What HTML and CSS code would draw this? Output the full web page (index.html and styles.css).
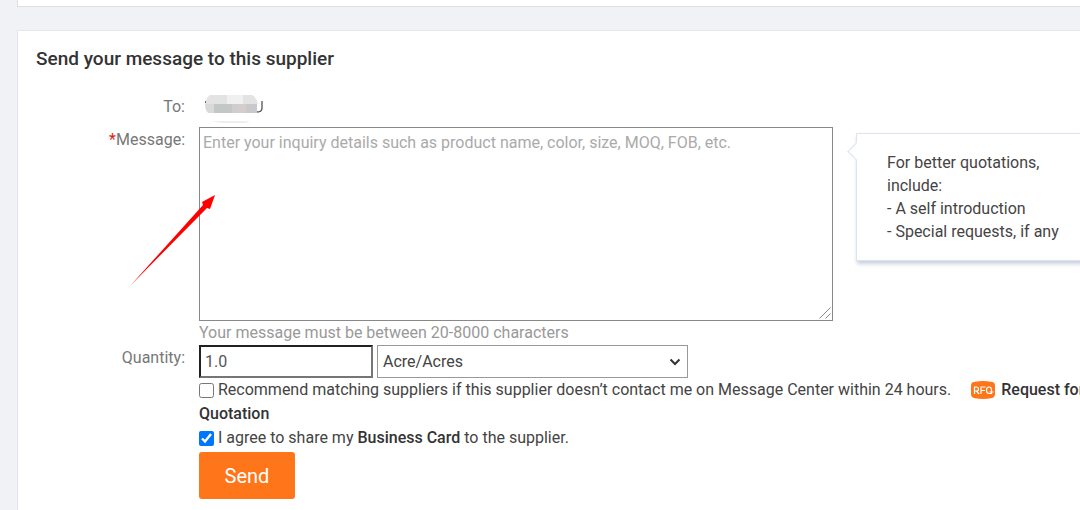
FILE: index.html
```
<!DOCTYPE html>
<html lang="en">
<head>
  <meta charset="UTF-8">
  <meta name="viewport" content="width=device-width, initial-scale=1.0">
  <title>Send your message to this supplier</title>
  <link rel="stylesheet" href="styles.css">
</head>
<body>
  <section class="card previous"></section>

  <section class="card inquiry">
    <h2>Send your message to this supplier</h2>

    <form class="form">
      <span class="label">To:</span>
      <div class="recipient">
        <svg width="60" height="28" viewBox="0 0 60 28" role="img" aria-label="Recipient name hidden">
          <path d="M6 0h42q5 3 6 9H1q1-6 5-9z" fill="#e3e3e3"/>
          <path d="M23 0h16v9H23z" fill="#f0f0f0"/>
          <path d="M1 9h9v9H4q-3-3-3-9z" fill="#d9d9d9"/>
          <path d="M10 9h18v9H10z" fill="#c3c7c6"/>
          <path d="M28 9h6v9h-6z" fill="#cecece"/>
          <path d="M34 9h8v9h-8z" fill="#d5cdca"/>
          <path d="M42 9h11v9H42z" fill="#c8c9cc"/>
          <path d="M8 26h38q-7 4-19 3t-19-3z" fill="#eeeeee"/>
          <path d="M1 6h1v2H1z" fill="#666"/>
          <path d="M58 6v7q0 4-5 4" fill="none" stroke="#555" stroke-width="1.3"/>
        </svg>
      </div>

      <label class="label" for="message"><span class="required">*</span>Message:</label>
      <div class="message-row">
        <div class="message-box">
          <textarea id="message" placeholder="Enter your inquiry details such as product name, color, size, MOQ, FOB, etc."></textarea>
          <svg class="grip" width="12" height="12" viewBox="0 0 12 12" aria-hidden="true">
            <path d="M.5 11.500L11.500.5M6.500 11.500l5-5" fill="none" stroke="#888"/>
          </svg>
          <svg class="arrow" width="86" height="92" viewBox="0 0 86 92" aria-hidden="true">
            <path d="M0 91L73 10l-1-3 13-7-5 14-3-1z" fill="#f00"/>
          </svg>
        </div>
        <aside class="tips">
          For better quotations, include:<br>
          - A self introduction<br>
          - Special requests, if any
        </aside>
      </div>

      <p class="hint">Your message must be between 20-8000 characters</p>

      <label class="label" for="quantity">Quantity:</label>
      <div class="quantity-row">
        <input class="quantity" id="quantity" type="text" value="1.0">
        <div class="unit-box">
          <select class="unit" aria-label="Unit">
            <option>Acre/Acres</option>
          </select>
          <svg class="chevron" width="12" height="8" viewBox="0 0 12 8" aria-hidden="true">
            <path d="M1.500 1.500L6 6l4.500-4.500" fill="none" stroke="#333" stroke-width="2"/>
          </svg>
        </div>
      </div>

      <div class="options">
        <div class="option">
          <input type="checkbox" id="recommend">
          <label for="recommend">Recommend matching suppliers if this supplier doesn’t contact me on Message Center within 24 hours.</label>
          <a class="rfq" href="#rfq"><svg class="rfq-icon" width="24" height="18" viewBox="0 0 24 18" aria-hidden="true">
            <path d="M3 1Q12-1 21 1q3 0 3 4v8q0 3-3 4-9 2-18 0-3-1-3-4V5q0-4 3-4z" fill="#ff7519"/>
            <path d="M3.500 13V6h2q2 0 2 2t-2 2h-2m2 0l2.500 3M10 13V6h4.500M10 9.500h4M20 12.500h-2q-2.500 0-2.500-3.200T18 6t2.500 3.300M18.500 11h4m-2-2v4" fill="none" stroke="#fff" stroke-width="1.2"/>
          </svg>Request for Quotation</a>
        </div>
        <div class="option">
          <input type="checkbox" id="agree" checked>
          <label for="agree">I agree to share my <strong>Business Card</strong> to the supplier.</label>
        </div>
        <button class="send" type="button">Send</button>
      </div>
    </form>
  </section>
</body>
</html>
```
FILE: styles.css
```
* {
  box-sizing: border-box;
}
body {
  margin: 0;
  padding-left: 17px;
  background-color: #f1f2f6;
  color: #444;
  font-family: Roboto, Arial, sans-serif;
  font-size: 16px;
  line-height: 24px;
  overflow: hidden;
}
/* the cards run on past the right edge of the window */
.card {
  margin-right: -60px;
  background-color: #fff;
  border: 1px solid #e1e6ef;
}
.previous {
  height: 7px;
  border-top: 0;
  border-color: #dfdfdf;
}
.inquiry {
  margin-top: 23px;
  padding: 16px 30px 24px 18px;
}
h2 {
  margin: 0;
  color: #333;
  font-size: 19px;
  font-weight: 500;
  line-height: 24px;
}
.form {
  display: grid;
  grid-template-columns: 149px 1fr;
  column-gap: 14px;
  margin-top: 23px;
}
.label {
  padding-top: 1px;
  color: #777;
  text-align: right;
}
.required {
  color: #e02020;
}
.recipient {
  height: 33px;
  padding: 1px 0 0 5px;
}
.recipient svg {
  display: block;
}
.message-row {
  display: flex;
  align-items: flex-start;
  gap: 23px;
}
.message-box {
  position: relative;
  flex: 1;
}
textarea {
  display: block;
  width: 100%;
  height: 194px;
  padding: 3px;
  border: 1px solid #888;
  border-radius: 0;
  color: #444;
  font: inherit;
  resize: none;
}
textarea::placeholder {
  color: #aaa;
}
.grip {
  position: absolute;
  right: 2px;
  bottom: 2px;
}
.arrow {
  position: absolute;
  top: 68px;
  left: -69px;
  pointer-events: none;
}
.tips {
  position: relative;
  width: 253px;
  margin-top: 6px;
  padding: 17px 30px;
  border: 1px solid #dde3ef;
  background-color: #fff;
  box-shadow: 1px 3px 4px #c9d0dc;
  line-height: 23px;
}
.tips::before {
  content: "";
  position: absolute;
  top: 11px;
  left: -7px;
  width: 12px;
  height: 12px;
  border: solid #dde3ef;
  border-width: 0 0 1px 1px;
  background-color: #fff;
  transform: rotate(45deg);
}
.hint {
  grid-column: 2;
  margin: 0;
  color: #999;
}
.quantity-row {
  display: flex;
  gap: 4px;
}
.quantity {
  width: 174px;
  height: 33px;
  padding: 1px 4px;
  border: 2px inset #767676;
  color: #555;
  font: inherit;
}
.unit-box {
  position: relative;
  width: 311px;
}
.unit {
  width: 100%;
  height: 33px;
  padding: 0 5px;
  border: 1px solid #999;
  border-radius: 0;
  background-color: #fff;
  color: #444;
  font: inherit;
  appearance: none;
}
.chevron {
  position: absolute;
  top: 13px;
  right: 7px;
  pointer-events: none;
}
.options {
  grid-column: 2;
}
.option input {
  width: 15px;
  height: 15px;
  margin: 0;
  vertical-align: -3px;
}
.rfq {
  margin-left: 16px;
  color: #333;
  font-weight: 500;
  text-decoration: none;
}
.rfq-icon {
  margin-right: 6px;
  vertical-align: -4px;
}
strong {
  color: #333;
  font-weight: 500;
}
.send {
  display: block;
  min-width: 96px;
  margin-top: 2px;
  padding: 12px 24px 11px;
  border: 0;
  border-radius: 3px;
  background-color: #ff7519;
  color: #fff;
  font: inherit;
  font-size: 20px;
}
```
